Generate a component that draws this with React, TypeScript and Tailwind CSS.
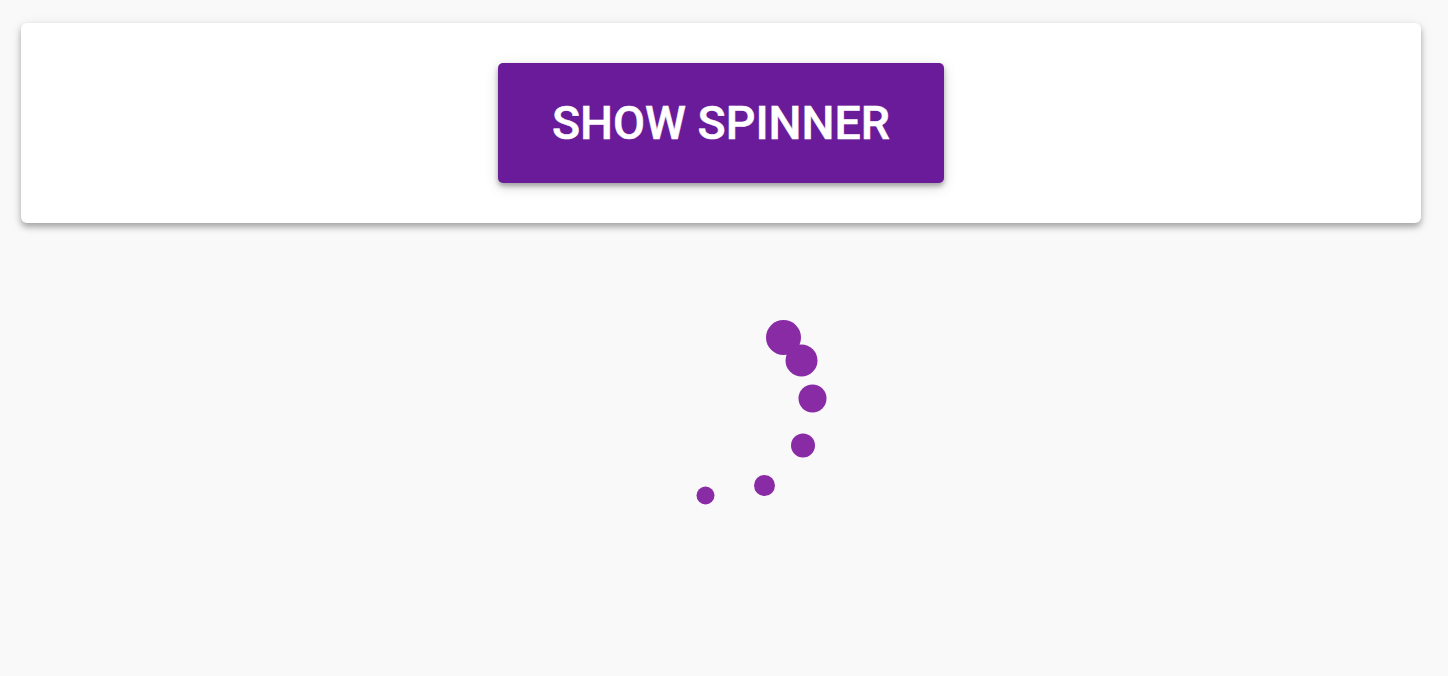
import React from "react";

const dots = [
  { x: 783.5, y: 337.5, r: 17.5 },
  { x: 801.5, y: 360.5, r: 16 },
  { x: 812.5, y: 398.5, r: 14 },
  { x: 803, y: 445.5, r: 12 },
  { x: 764.5, y: 485.5, r: 10.5 },
  { x: 705.5, y: 495.5, r: 9 },
];

export default function App() {
  return (
    <div className="min-h-[676px] bg-[#f9f9f9] pt-[23px]" style={{ fontFamily: "Roboto, 'Liberation Sans', sans-serif" }}>
      <div className="ml-[21px] flex h-[200px] w-[1400px] items-center justify-center rounded-[6px] bg-white shadow-[0_4px_6px_rgba(0,0,0,0.3),0_2px_14px_rgba(0,0,0,0.08)]">
        <button className="flex h-[120px] w-[446px] items-center justify-center rounded-[5px] bg-[#6a1b9a] text-[46.5px] font-medium leading-none text-white [-webkit-text-stroke:0.5px_white] shadow-[0_3px_5px_rgba(0,0,0,0.3),0_4px_14px_rgba(0,0,0,0.15)]">
          SHOW SPINNER
        </button>
      </div>
      <div className="mt-[77px] flex justify-center">
        <svg width="240" height="220" viewBox="604 300 240 220">
          {dots.map((d, i) => (
            <circle key={i} cx={d.x} cy={d.y} r={d.r} fill="#8a2ba6" />
          ))}
        </svg>
      </div>
    </div>
  );
}
